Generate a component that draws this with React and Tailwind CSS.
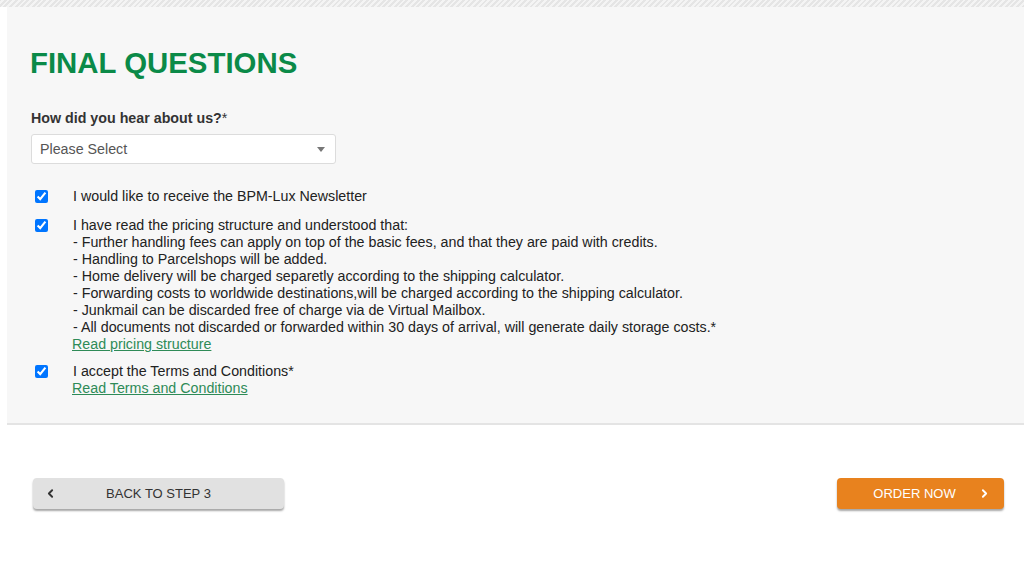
import React from "react";
import { ChevronLeft, ChevronRight } from "lucide-react";

const pricingLines = [
  "- Further handling fees can apply on top of the basic fees, and that they are paid with credits.",
  "- Handling to Parcelshops will be added.",
  "- Home delivery will be charged separetly according to the shipping calculator.",
  "- Forwarding costs to worldwide destinations,will be charged according to the shipping calculator.",
  "- Junkmail can be discarded free of charge via de Virtual Mailbox.",
  "- All documents not discarded or forwarded within 30 days of arrival, will generate daily storage costs.*",
];

const CheckRow = ({ children, className = "" }) => (
  <div className={`flex items-start ${className}`}>
    <div className="w-[42px] shrink-0 pl-[4px] pt-[2px]">
      <input
        type="checkbox"
        checked
        readOnly
        className="m-0 w-[13px] h-[13px] accent-[#0075ff] block"
      />
    </div>
    <div className="leading-[17px]">{children}</div>
  </div>
);

const App = () => {
  return (
    <div className="w-[1024px] h-[577px] bg-white overflow-hidden font-['Liberation_Sans',Arial,sans-serif] text-[14.25px] text-[#222]">
      <div className="h-[7px] bg-[repeating-linear-gradient(-45deg,#e5e5e5_0,#e5e5e5_2px,#f4f4f4_2px,#f4f4f4_4px)]" />

      <div className="ml-[7px] h-[418px] bg-[#f7f7f7] border-b-2 border-[#e4e4e4] pl-[24px] pt-[38px]">
        <h1 className="text-[29.4px] leading-[36px] font-bold text-[#0b8a48] -ml-[1px]">
          FINAL QUESTIONS
        </h1>

        <div className="mt-[29px] font-bold text-[#333] leading-[17px]">
          How did you hear about us?<span className="font-normal">*</span>
        </div>

        <div className="mt-[7px] w-[305px] h-[30px] bg-white border border-[#dcdcdc] rounded-[3px] flex items-center justify-between pl-[8px] pr-[10px] pt-[1px] text-[#555]">
          <span>Please Select</span>
          <span className="w-0 h-0 border-l-[4px] border-r-[4px] border-t-[5px] border-l-transparent border-r-transparent border-t-[#777]" />
        </div>

        <CheckRow className="mt-[24px]">
          I would like to receive the BPM-Lux Newsletter
        </CheckRow>

        <CheckRow className="mt-[12px]">
          <div>I have read the pricing structure and understood that:</div>
          {pricingLines.map((line) => (
            <div key={line}>{line}</div>
          ))}
          <a href="#" className="-ml-[1px] text-[#2e8b57] underline block">
            Read pricing structure
          </a>
        </CheckRow>

        <CheckRow className="mt-[10px]">
          <div>I accept the Terms and Conditions*</div>
          <a href="#" className="-ml-[1px] text-[#2e8b57] underline block">
            Read Terms and Conditions
          </a>
        </CheckRow>
      </div>

      <div className="flex justify-between items-start pl-[33px] pr-[20px] mt-[53px]">
        <button className="relative w-[251px] h-[31px] bg-[#e1e1e1] rounded-[4px] shadow-[0_2px_2px_rgba(0,0,0,0.35)] text-[13px] text-[#333] flex items-center justify-center">
          <ChevronLeft
            className="absolute left-[11px] top-[9px] text-[#333]"
            size={13}
            strokeWidth={3.5}
          />
          BACK TO STEP 3
        </button>
        <button className="relative w-[167px] h-[31px] bg-[#e8821e] rounded-[4px] shadow-[0_2px_2px_rgba(0,0,0,0.35)] text-[13px] text-white flex items-center justify-center pr-[12px]">
          ORDER NOW
          <ChevronRight
            className="absolute right-[13px] top-[9px] text-white"
            size={13}
            strokeWidth={3.5}
          />
        </button>
      </div>
    </div>
  );
};

export default App;
